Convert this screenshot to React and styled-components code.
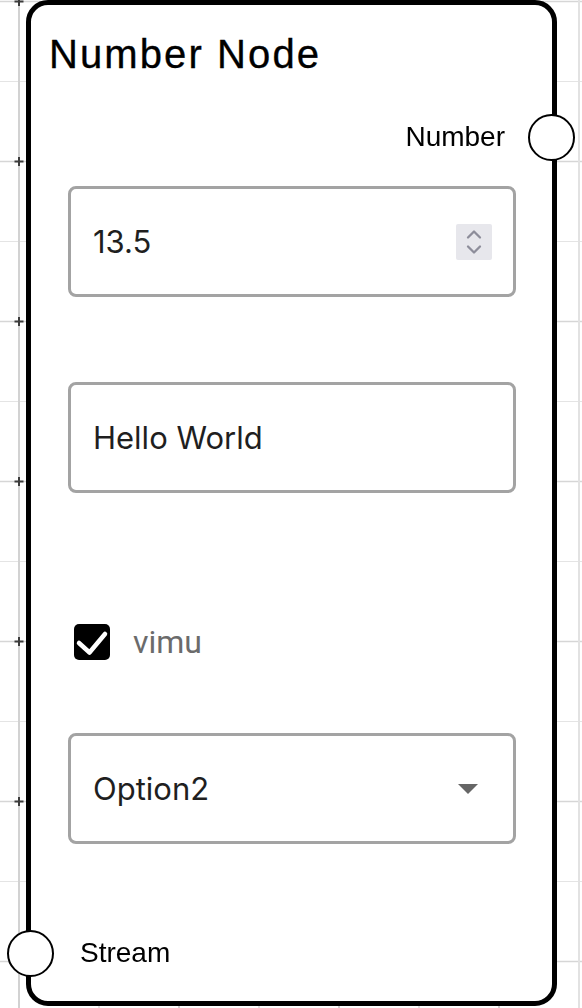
import React from 'react';
import styled, { createGlobalStyle } from 'styled-components';

const GlobalStyle = createGlobalStyle`
  html, body {
    margin: 0;
    padding: 0;
    background: #ffffff;
    overflow: hidden;
  }
`;

const GRID = 80;
const OFFSET_X = 19;
const OFFSET_Y = 1;
const WIDTH = 582;
const HEIGHT = 1008;

function GridBackdrop() {
  const cols = [];
  for (let x = OFFSET_X; x < WIDTH; x += GRID) cols.push(x);
  const rows = [];
  for (let y = OFFSET_Y; y < HEIGHT; y += GRID) rows.push(y);

  const isMajor = (v, off) => (v - off) % (GRID * 2) === 0;

  return (
    <Backdrop width={WIDTH} height={HEIGHT} viewBox={`0 0 ${WIDTH} ${HEIGHT}`}>
      {rows.map(y => (
        <line
          key={`h${y}`}
          x1={0}
          x2={WIDTH}
          y1={y + 0.5}
          y2={y + 0.5}
          stroke={isMajor(y, OFFSET_Y) ? '#d6d6d6' : '#e4e4e4'}
          strokeWidth={isMajor(y, OFFSET_Y) ? 1.5 : 1}
        />
      ))}
      {cols.map(x => (
        <line
          key={`v${x}`}
          x1={x}
          x2={x}
          y1={0}
          y2={HEIGHT}
          stroke={isMajor(x, OFFSET_X) ? '#d2d2d2' : '#e2e2e2'}
          strokeWidth={2}
        />
      ))}
      {cols
        .filter(x => isMajor(x, OFFSET_X))
        .flatMap(x =>
          rows
            .filter(y => isMajor(y, OFFSET_Y))
            .map(y => (
              <path
                key={`p${x}-${y}`}
                d={`M${x - 4.5} ${y + 0.5}H${x + 4.5}M${x} ${y - 4}V${y + 5}`}
                stroke="#3c3c3c"
                strokeWidth={2}
              />
            ))
        )}
    </Backdrop>
  );
}

export default function App() {
  return (
    <>
      <GlobalStyle />
      <GridBackdrop />
      <Stage>
        <Node>
          <Title>Number Node</Title>

          <PortRow $align="right">
            <PortLabel>Number</PortLabel>
            <Port $side="right" />
          </PortRow>

          <Field $top={15}>
            <TextInput defaultValue="13.5" />
            <Spinner>
              <svg width="16" height="26" viewBox="0 0 16 26">
                <path
                  d="M2 8.5L8 2.5l6 6M2 17.5l6 6 6-6"
                  fill="none"
                  stroke="#8d8d9a"
                  strokeWidth="2.3"
                  strokeLinecap="round"
                  strokeLinejoin="round"
                />
              </svg>
            </Spinner>
          </Field>

          <Field $top={85}>
            <TextInput defaultValue="Hello World" />
          </Field>

          <CheckRow>
            <CheckBox>
              <svg width="36" height="36" viewBox="0 0 36 36">
                <path
                  d="M5 19l10.5 9.5L31 10"
                  fill="none"
                  stroke="#ffffff"
                  strokeWidth="4.5"
                  strokeLinecap="round"
                  strokeLinejoin="round"
                />
              </svg>
            </CheckBox>
            <CheckLabel>vimu</CheckLabel>
          </CheckRow>

          <Field $top={61} $select>
            <SelectValue>Option2</SelectValue>
            <svg width="20" height="10" viewBox="0 0 20 10">
              <path d="M0 0h20L10 10z" fill="#666666" />
            </svg>
          </Field>

          <PortRow $align="left" $top={79}>
            <Port $side="left" />
            <PortLabel>Stream</PortLabel>
          </PortRow>
        </Node>
      </Stage>
    </>
  );
}

const Backdrop = styled.svg`
  position: fixed;
  top: 0;
  left: 0;
  z-index: 0;
  display: block;
`;

const Stage = styled.div`
  position: relative;
  z-index: 1;
  display: flex;
  align-items: flex-start;
  height: 1008px;
  padding-left: 26px;
  box-sizing: border-box;
`;

const Node = styled.div`
  display: flex;
  flex-direction: column;
  width: 531px;
  height: 1006px;
  box-sizing: border-box;
  border: 5px solid #000000;
  border-radius: 22px;
  background: #ffffff;
`;

const Title = styled.h1`
  display: flex;
  align-items: center;
  height: 98px;
  margin: 0;
  padding-left: 18px;
  font-family: 'Liberation Sans', Arial, sans-serif;
  font-size: 40px;
  font-weight: 400;
  letter-spacing: 2.1px;
  -webkit-text-stroke: 0.35px #000;
  color: #000000;
`;

const PortRow = styled.div`
  position: relative;
  display: flex;
  align-items: center;
  justify-content: ${p => (p.$align === 'right' ? 'flex-end' : 'flex-start')};
  height: ${p => (p.$align === 'right' ? 68 : 60)}px;
  margin-top: ${p => p.$top || 0}px;
  padding: ${p => (p.$align === 'right' ? '0 47px 0 0' : '0 0 0 49px')};
`;

const PortLabel = styled.span`
  font-family: 'Liberation Sans', Arial, sans-serif;
  font-size: 28px;
  color: #000000;
`;

const Port = styled.span`
  position: absolute;
  top: 50%;
  ${p => (p.$side === 'right' ? 'right: -23px;' : 'left: -24px;')}
  width: 47px;
  height: 47px;
  box-sizing: border-box;
  margin-top: -23.5px;
  border: 2px solid #000000;
  border-radius: 50%;
  background: #ffffff;
`;

const Field = styled.div`
  display: flex;
  align-items: center;
  height: 111px;
  margin: ${p => p.$top}px 36px 0 37px;
  padding: ${p => (p.$select ? '0 35px 0 22px' : '0 21px 0 22px')};
  box-sizing: border-box;
  border: 3px solid #a3a3a3;
  border-radius: 8px;
  background: #ffffff;
`;

const TextInput = styled.input`
  flex: 1;
  min-width: 0;
  padding: 0;
  border: none;
  outline: none;
  background: transparent;
  font-family: Inter, 'Liberation Sans', sans-serif;
  font-size: 31px;
  color: #1f1f1f;
`;

const Spinner = styled.span`
  display: flex;
  align-items: center;
  justify-content: center;
  width: 36px;
  height: 36px;
  border-radius: 2px;
  background: #e7e7ec;
`;

const SelectValue = styled.span`
  flex: 1;
  font-family: Inter, 'Liberation Sans', sans-serif;
  font-size: 31px;
  color: #1f1f1f;
`;

const CheckRow = styled.label`
  display: flex;
  align-items: center;
  gap: 23px;
  height: 60px;
  margin-top: 119px;
  padding-left: 43px;
`;

const CheckBox = styled.span`
  display: flex;
  width: 36px;
  height: 36px;
  border-radius: 5px;
  background: #000000;
`;

const CheckLabel = styled.span`
  font-family: Roboto, 'Liberation Sans', sans-serif;
  font-size: 32px;
  color: #6b6b6b;
`;
